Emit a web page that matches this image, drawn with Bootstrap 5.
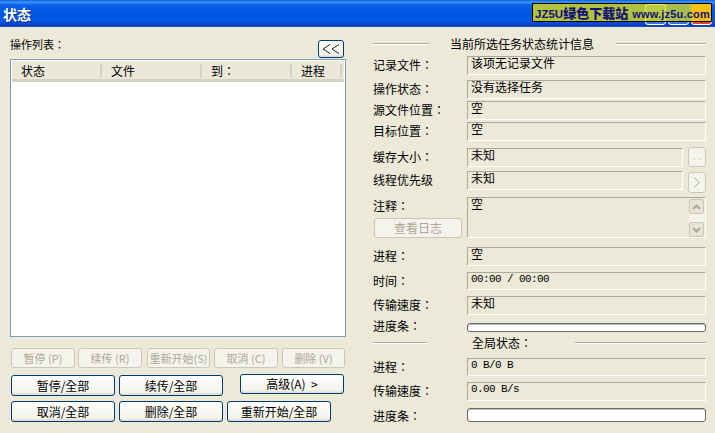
<!DOCTYPE html>
<html lang="zh-TW">
<head>
<meta charset="utf-8">
<link href="https://cdn.jsdelivr.net/npm/bootstrap@5.3.0/dist/css/bootstrap.min.css" rel="stylesheet">
<style>
html,body{margin:0;height:433px;overflow:hidden;background:#ece9d8;}
body{font-family:"Noto Sans CJK SC","Liberation Sans",sans-serif;font-size:12px;line-height:14px;color:#000;}
.cn{font-family:"Noto Sans CJK TC",sans-serif;}
.win{width:715px;height:433px;position:relative;overflow:hidden;}
.tbar{height:27px;padding:0 3px;color:#fff;font-weight:700;font-size:14px;text-shadow:1px 1px 0 #0a2a8a;
 background:linear-gradient(180deg,#0a5fdc 0,#3f93f7 2px,#0a62e6 5px,#0055e2 14px,#0058e8 21px,#0a3fc0 25px,#1a4fc0 27px);}
.capbtn{width:21px;height:21px;margin-top:1px;border:1px solid #fff;border-radius:3px;background:#3a70e0;margin-left:2px;}
.capbtn.cl{background:#d9452a;}
.stamp{position:absolute;left:532px;top:3px;width:180px;height:19px;background:#b1c33e;border:1px solid #000;
 font-weight:700;line-height:17px;color:#14107a;padding-left:2px;white-space:nowrap;overflow:hidden;}
.stamp span{position:relative;}
.stamp i{font-style:normal;font-family:"Liberation Sans",sans-serif;font-size:11.5px;}
.stamp em{font-style:normal;font-family:"Noto Sans CJK SC",sans-serif;font-size:13px;font-weight:900;}
.stamp b{font-family:"Liberation Sans",sans-serif;font-size:11px;margin-left:4px;letter-spacing:.2px;}
.ghost{position:absolute;top:0;width:21px;height:18px;border:1px solid #e4e85a;border-bottom:0;border-radius:3px 3px 0 0;background:#bccb45;}
.g1{left:112px}.g2{left:135px;border-color:#a3b97a;background:#a9bd4c}.g3{left:158px;border-color:#f0c020;background:#fdc010}
.pane{height:406px;}
.lft{width:358px;padding:10px 12px 0 10px;flex:none;}
.rgt{width:357px;padding:9px 9px 0 15px;flex:none;}
.lt-head{height:22px;}
.lt-label{font-size:11px;}
.xbtn{background:linear-gradient(180deg,#fff,#f4f3ec 85%,#dcd8c8);border:1px solid #003c74;border-radius:3px;color:#000;padding:0;font-size:12px;line-height:14px;}
.back{width:26px;height:18px;margin-right:2px;margin-top:3px;display:flex;align-items:center;justify-content:center;}
.lst{width:336px;height:278px;background:#fff;border:1px solid #7f9db9;padding:1px;}
.lst-h{height:21px;background:#ebe8d9;border-bottom:3px solid #d6d2c2;}
.lst-h>div{height:14px;margin-top:3px;padding-left:9px;border-right:2px solid #d6d2c2;}
.c1{width:90px}.c2{width:100px}.c3{width:90px}.c4{width:50px}
.row-a{margin-top:11px;margin-left:1px;}
.dis{height:20px;width:64px;background:#f4f3ec;border:1px solid #c9c7ba;border-radius:3px;color:#aca899;padding:0;white-space:nowrap;overflow:hidden;font-size:11px;line-height:18px;flex:none;}
.row-a .dis:nth-child(2){margin-left:3px}
.row-a .dis:nth-child(3){margin-left:5px;width:63px;display:flex;justify-content:center}
.row-a .dis:nth-child(4){margin-left:4px}
.row-a .dis:nth-child(5){margin-left:4px;width:63px}
.row-b{margin-top:7px;margin-left:1px;}
.big{height:21px;width:104px;margin-right:4px;}
.adv{height:20px;width:104px;margin-left:13px;margin-top:-1px;}
.row-c{margin-top:5px;margin-left:1px;}
.grp{height:14px;margin-top:1px;}
.grp hr{flex:1;margin:0;border:0;border-top:1px solid #aca899;border-bottom:1px solid #fff;height:2px;opacity:1;}
.ttl hr:first-child{flex:none;width:56px}
.gl hr:first-child{flex:none;width:54px}
.gl{margin-top:4px}
.f1{padding:0 22px 0 21px;white-space:nowrap}
.f2{padding:0 43px 0 45px;white-space:nowrap}
.rw{height:19px;}
.s2{margin-top:2px}.s4{margin-top:4px}.s5{margin-top:5px}.s6{margin-top:6px}.s7{margin-top:7px}.s8{margin-top:8px}.s9{margin-top:9px}
.h18{height:18px}
.lab{width:94px;flex:none;padding-top:2px;}
.fld{flex:1;min-width:0;border:1px solid #aca899;border-right-color:#fff;border-bottom-color:#fff;padding:0 3px;line-height:11px;white-space:nowrap;}
.mono{font-family:"Liberation Mono",monospace;font-size:11px;letter-spacing:-.6px;line-height:12px;}
.sbtn{width:18px;height:20px;margin:-1px 0 0 5px;flex:none;background:#f4f3ec;border:1px solid #c9c7ba;border-radius:3px;color:#aca899;padding:0;font-size:11px;line-height:14px;font-family:"Liberation Sans",sans-serif;display:flex;align-items:center;justify-content:center;}
.sbtn.t2{height:21px;margin-top:1px;}
.note{height:41px;}
.log{width:88px;height:20px;display:block;margin:5px 0 0 1px;font-size:12px;}
.sb{width:15px;flex:none;margin:1px 1px 0 0;height:38px;background:#f5f4ea;display:flex;flex-direction:column;justify-content:space-between;}
.sb span{height:15px;background:#e6e4d6;border:1px solid #c9c7ba;border-radius:2px;display:flex;align-items:center;justify-content:center;}
.fld.nt{padding-right:0;}
.bar{flex:1;border:1px solid #686868;border-radius:3px;background:#fff;box-shadow:inset 0 1px 1px #bdbdbd;}
.pb1{height:9px;}
.pb2{height:14px;}
.lab.l1{padding-top:0;margin-top:-4px;}
.lab.l2{padding-top:0;margin-top:1px;}
svg{display:block;fill:none;}
</style>
</head>
<body>
<div class="win">
  <div class="tbar d-flex align-items-center justify-content-between">
    <span lang="zh-CN">状态</span>
    <div class="d-flex">
      <div class="capbtn"></div><div class="capbtn"></div><div class="capbtn cl"></div>
    </div>
  </div>
  <div class="stamp">
    <div class="ghost g1"></div><div class="ghost g2"></div><div class="ghost g3"></div>
    <span><i>JZ5U</i><em>绿色下载站</em><b>www.jz5u.com</b></span>
  </div>
  <div class="pane d-flex">
    <div class="lft">
      <div class="lt-head d-flex justify-content-between">
        <span class="lt-label">操作列表<span class="cn">：</span></span>
        <button class="xbtn back"><svg width="18" height="10" stroke="#222"><path d="M8 .5 1 5l7 4.500M17 .5 10 5l7 4.500"/></svg></button>
      </div>
      <div class="lst">
        <div class="lst-h d-flex">
          <div class="c1">状态</div><div class="c2">文件</div><div class="c3">到<span class="cn">：</span></div><div class="c4">进程</div>
        </div>
      </div>
      <div class="row-a d-flex">
        <button class="dis">暂停 (P)</button>
        <button class="dis">续传 (R)</button>
        <button class="dis">重新开始(S)</button>
        <button class="dis">取消 (C)</button>
        <button class="dis">删除 (V)</button>
      </div>
      <div class="row-b d-flex">
        <button class="xbtn big">暂停/全部</button>
        <button class="xbtn big">续传/全部</button>
        <button class="xbtn adv">高级(A) &nbsp;&gt;</button>
      </div>
      <div class="row-c d-flex">
        <button class="xbtn big">取消/全部</button>
        <button class="xbtn big">删除/全部</button>
        <button class="xbtn big">重新开始/全部</button>
      </div>
    </div>
    <div class="rgt">
      <div class="grp ttl d-flex align-items-center"><hr><span class="f1">当前所选任务状态统计信息</span><hr></div>
      <div class="rw s5 d-flex"><div class="lab">记录文件<span class="cn">：</span></div><div class="fld">该项无记录文件</div></div>
      <div class="rw s5 d-flex"><div class="lab">操作状态<span class="cn">：</span></div><div class="fld">没有选择任务</div></div>
      <div class="rw s2 d-flex"><div class="lab">源文件位置<span class="cn">：</span></div><div class="fld">空</div></div>
      <div class="rw s2 d-flex"><div class="lab">目标位置<span class="cn">：</span></div><div class="fld">空</div></div>
      <div class="rw s7 d-flex"><div class="lab">缓存大小<span class="cn">：</span></div><div class="fld">未知</div><button class="sbtn"><svg width="8" height="8" fill="none"><path d="M1 6h1M6 6h1" stroke="#aca899"/></svg></button></div>
      <div class="rw s4 d-flex"><div class="lab">线程优先级</div><div class="fld">未知</div><button class="sbtn t2"><svg width="8" height="11" stroke="#aca899"><path d="M1 .5 6.500 5.500 1 10.500"/></svg></button></div>
      <div class="note s7 d-flex">
        <div class="lab">注释<span class="cn">：</span><button class="xbtn dis log">查看日志</button></div>
        <div class="fld nt d-flex justify-content-between"><span>空</span><div class="sb"><span><svg width="9" height="6" stroke="#aca899" stroke-width="2"><path d="M1 5 4.500 1.500 8 5"/></svg></span><span><svg width="9" height="6" stroke="#aca899" stroke-width="2"><path d="M1 1 4.500 4.500 8 1"/></svg></span></div></div>
      </div>
      <div class="rw s9 d-flex"><div class="lab">进程<span class="cn">：</span></div><div class="fld">空</div></div>
      <div class="rw h18 s6 d-flex"><div class="lab">时间<span class="cn">：</span></div><div class="fld mono">00:00 / 00:00</div></div>
      <div class="rw s6 d-flex"><div class="lab">传输速度<span class="cn">：</span></div><div class="fld">未知</div></div>
      <div class="pb1 s8 d-flex"><div class="lab l1">进度条<span class="cn">：</span></div><div class="bar"></div></div>
      <div class="grp gl d-flex align-items-center"><hr><span class="f2">全局状态<span class="cn">：</span></span><hr></div>
      <div class="rw h18 s8 d-flex"><div class="lab">进程<span class="cn">：</span></div><div class="fld mono">0 B/0 B</div></div>
      <div class="rw s6 d-flex"><div class="lab">传输速度<span class="cn">：</span></div><div class="fld mono">0.00 B/s</div></div>
      <div class="pb2 s7 d-flex"><div class="lab l2">进度条<span class="cn">：</span></div><div class="bar"></div></div>
    </div>
  </div>
</div>
</body>
</html>
